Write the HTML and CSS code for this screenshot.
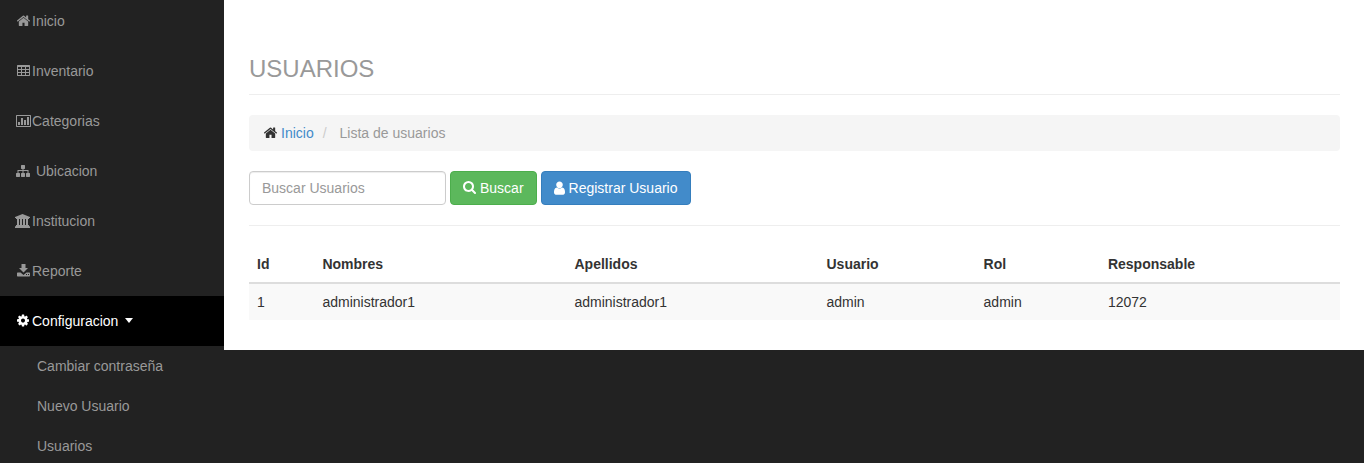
FILE: index.html
```
<!DOCTYPE html>
<html lang="es">
<head>
<meta charset="utf-8">
<title>Usuarios</title>
<link rel="stylesheet" href="styles.css">
</head>
<body>
<svg class="defs" aria-hidden="true">
  <symbol id="home" viewBox="96 64 1600 1723"><path d="M1472 992v480q0 26-19 45t-45 19h-384v-384h-256v384h-384q-26 0-45-19t-19-45v-480q0-1 .5-3t.5-3l575-474 575 474q1 2 1 6zm223-69l-62 74q-8 9-21 11h-3q-13 0-21-7l-692-577-692 577q-12 8-24 7-13-2-21-11l-62-74q-8-10-7-23.5t11-21.5l719-599q32-26 76-26t76 26l244 204v-195q0-14 9-23t23-9h192q14 0 23 9t9 23v408l219 182q10 8 11 21.5t-7 23.5z"/></symbol>
</svg>
<div class="layout">
  <nav class="sidebar">
    <ul class="menu">
      <li><a href="#"><svg class="icon" viewBox="0 0 16 14"><use href="#home" x="2" y="0" width="13" height="14"/></svg>Inicio</a></li>
      <li><a href="#"><svg class="icon" viewBox="0 0 16 14"><path fill-rule="evenodd" d="M2.500 1h12l.5.5v10l-.5.5h-12l-.5-.5v-10zM3 3v2h3V3zM7 3v2h3V3zM11 3v2h3V3zM3 6v2h3V6zM7 6v2h3V6zM11 6v2h3V6zM3 9v2h3V9zM7 9v2h3V9zM11 9v2h3V9z"/></svg>Inventario</a></li>
      <li><a href="#"><svg class="icon" viewBox="0 0 16 14"><path fill-rule="evenodd" d="M1.500 1h14l.5.5v11l-.5.5h-14l-.5-.5v-11zM2 2v10h13V2zM3 8h2v3H3zM6 4h2v7H6zM9 6h2v5H9zM12 3h2v8h-2z"/></svg>Categorias</a></li>
      <li><a href="#"><svg class="icon" viewBox="0 0 16 14"><path d="M6.500 1h3l.5.5v3l-.5.5h-1v1H13.500v3h1l.5.5v3l-.5.5h-3l-.5-.5v-3l.5-.5h1V7h-4v2h1l.5.5v3l-.5.5h-3l-.5-.5v-3l.5-.5h1V7h-4v2h1l.5.5v3l-.5.5h-3l-.5-.5v-3l.5-.5h1V6h5V5h-1L6 4.500v-3z"/></svg>&nbsp;Ubicacion</a></li>
      <li><a href="#"><svg class="icon" viewBox="0 0 16 14"><path d="M7.500 0L15 3v1h-1v1H1V4H0V3zM2 5h2v6h1V5h2v6h1V5h2v6h1V5h2v6h1v1H1v-1h1zM0 13q0-1 1-1h13q1 0 1 1v1H0z"/></svg>Institucion</a></li>
      <li><a href="#"><svg class="icon" viewBox="0 0 16 14"><path fill-rule="evenodd" d="M6.500 0h4v4h2.500L8.500 8.500 4 4h2.500zM2.500 8.500h3l3 2.500 3-2.500h3l.5.5v3l-.5.500h-12l-.5-.5V9zM11 10v1h1v-1zM13 10v1h1v-1z"/></svg>Reporte</a></li>
      <li class="active"><a href="#" aria-expanded="true"><svg class="icon" viewBox="0 0 16 14"><svg x="2" y="0" width="12" height="14" viewBox="128 64 1536 1792"><path d="M1152 896q0-106-75-181t-181-75-181 75-75 181 75 181 181 75 181-75 75-181zm512-109v222q0 12-8 23t-20 13l-185 28q-19 54-39 91 35 50 107 138 10 12 10 25t-9 23q-27 37-99 108t-94 71q-12 0-26-9l-138-108q-44 23-91 38-16 136-29 186-7 28-36 28h-222q-14 0-24.500-8.500t-11.500-21.500l-28-184q-49-16-90-37l-141 107q-10 9-25 9-14 0-25-11-126-114-165-168-7-10-7-23 0-12 8-23 15-21 51-66.500t54-70.500q-27-50-41-99l-183-27q-13-2-21-12.500t-8-23.500v-222q0-12 8-23t19-13l186-28q14-46 39-92-40-57-107-138-10-12-10-24 0-10 9-23 26-36 98.500-107.500t94.500-71.500q13 0 26 10l138 107q44-23 91-38 16-136 29-186 7-28 36-28h222q14 0 24.500 8.500t11.500 21.500l28 184q49 16 90 37l142-107q9-9 24-9 13 0 25 10 129 119 165 170 7 8 7 22 0 12-8 23-15 21-51 66.500t-54 70.500q26 50 41 98l183 28q13 2 21 12.500t8 23.500z"/></svg></svg>Configuracion<svg class="caret" viewBox="0 0 8 6"><path d="M0 0h8L4 5z"/></svg></a>
        <ul class="submenu">
          <li><a href="#">Cambiar contraseña</a></li>
          <li><a href="#">Nuevo Usuario</a></li>
          <li><a href="#">Usuarios</a></li>
        </ul>
      </li>
    </ul>
  </nav>
  <main class="content">
    <h1>USUARIOS</h1>
    <ol class="breadcrumb">
      <li><svg class="glyph" viewBox="0 0 13 14"><use href="#home" width="13" height="14"/></svg><a href="#">Inicio</a></li>
      <li class="current">Lista de usuarios</li>
    </ol>
    <form class="search">
      <input type="text" placeholder="Buscar Usuarios" aria-label="Buscar Usuarios">
      <button type="button" class="btn green"><svg class="glyph" viewBox="64 128 1664 1792"><path d="M1216 832q0-185-131.500-316.500t-316.500-131.500-316.500 131.500-131.500 316.500 131.500 316.500 316.500 131.500 316.500-131.500 131.500-316.500zm512 832q0 52-38 90t-90 38q-54 0-90-38l-343-342q-179 124-399 124-143 0-273.500-55.500t-225-150-150-225-55.500-273.500 55.500-273.500 150-225 225-150 273.500-55.500 273.500 55.500 225 150 150 225 55.500 273.500q0 220-124 399l343 343q37 37 37 90z"/></svg>Buscar</button>
      <button type="button" class="btn blue"><svg class="glyph user" viewBox="256 64 1280 1629"><path d="M1536 1399q0 109-62.500 187t-150.500 78h-854q-88 0-150.500-78t-62.500-187q0-85 8.500-160.500t31.500-152 58.500-131 94-89 134.500-34.500q131 128 313 128t313-128q76 0 134.500 34.500t94 89 58.500 131 31.500 152 8.500 160.500zm-256-887q0 159-112.500 271.500t-271.500 112.500-271.500-112.500-112.500-271.500 112.500-271.500 271.500-112.500 271.500 112.500 112.500 271.500z"/></svg>Registrar Usuario</button>
    </form>
    <table>
      <colgroup><col class="c-id"><col class="c-name"><col class="c-name"><col class="c-user"><col class="c-role"><col></colgroup>
      <thead><tr><th>Id</th><th>Nombres</th><th>Apellidos</th><th>Usuario</th><th>Rol</th><th>Responsable</th></tr></thead>
      <tbody><tr><td>1</td><td>administrador1</td><td>administrador1</td><td>admin</td><td>admin</td><td>12072</td></tr></tbody>
    </table>
  </main>
</div>
</body>
</html>
```
FILE: styles.css
```
* { box-sizing: border-box; }
body {
  margin: 0;
  background: #222;
  color: #333;
  font: 14px/20px "Liberation Sans", Arial, sans-serif;
}
a { color: #428bca; text-decoration: none; }
ul, ol { margin: 0; padding: 0; list-style: none; }
svg { fill: currentColor; }
.defs { display: none; }

.layout { display: flex; align-items: flex-start; }
.sidebar { flex: 0 0 224px; }
.sidebar a { display: flex; align-items: center; color: #999; }
.menu > li > a { padding: 15px; }
.menu > li:first-child > a { padding-top: 11px; }
.menu > .active > a { background: #000; color: #fff; }
.submenu a { padding: 10px 15px 10px 37px; }
.icon { width: 16px; height: 14px; flex: none; margin-right: 1px; }
.caret { width: 8px; height: 6px; margin-left: 7px; }

.content { flex: 1; min-width: 0; padding: 54px 24px 30px 25px; background: #fff; }
h1 {
  margin: 0 0 20px;
  padding-bottom: 10px;
  border-bottom: 1px solid #eee;
  color: #999;
  font-size: 24px;
  font-weight: 400;
  line-height: 30px;
}
.breadcrumb {
  display: flex;
  margin-bottom: 20px;
  padding: 8px 15px;
  border-radius: 4px;
  background: #f5f5f5;
}
.breadcrumb li { display: flex; align-items: center; }
.current { color: #999; }
.current::before { content: "/"; padding: 0 13px 0 9px; color: #ccc; }
.glyph { width: 13px; height: 14px; flex: none; margin-right: 4px; }
.user { width: 11px; }

.search {
  display: flex;
  gap: 4px;
  padding-bottom: 20px;
  border-bottom: 1px solid #eee;
}
.search input {
  width: 197px;
  height: 34px;
  padding: 6px 12px;
  border: 1px solid #ccc;
  border-radius: 4px;
  box-shadow: inset 0 1px 1px rgba(0, 0, 0, .075);
  background: #fff;
  color: #555;
  font: inherit;
}
.search input::placeholder { color: #999; opacity: 1; }
.btn {
  display: flex;
  align-items: center;
  padding: 6px 12px;
  border: 1px solid;
  border-radius: 4px;
  color: #fff;
  font: inherit;
}
.green { background: #5cb85c; border-color: #4cae4c; }
.blue { background: #428bca; border-color: #357ebd; }

table {
  width: 100%;
  margin-top: 20px;
  border-collapse: separate;
  border-spacing: 0;
  table-layout: fixed;
}
.c-id { width: 6%; }
.c-name { width: 23.1%; }
.c-user { width: 14.4%; }
.c-role { width: 11.4%; }
th, td { padding: 8px; text-align: left; }
th { border-bottom: 2px solid #ddd; }
td { background: #f9f9f9; }
```
